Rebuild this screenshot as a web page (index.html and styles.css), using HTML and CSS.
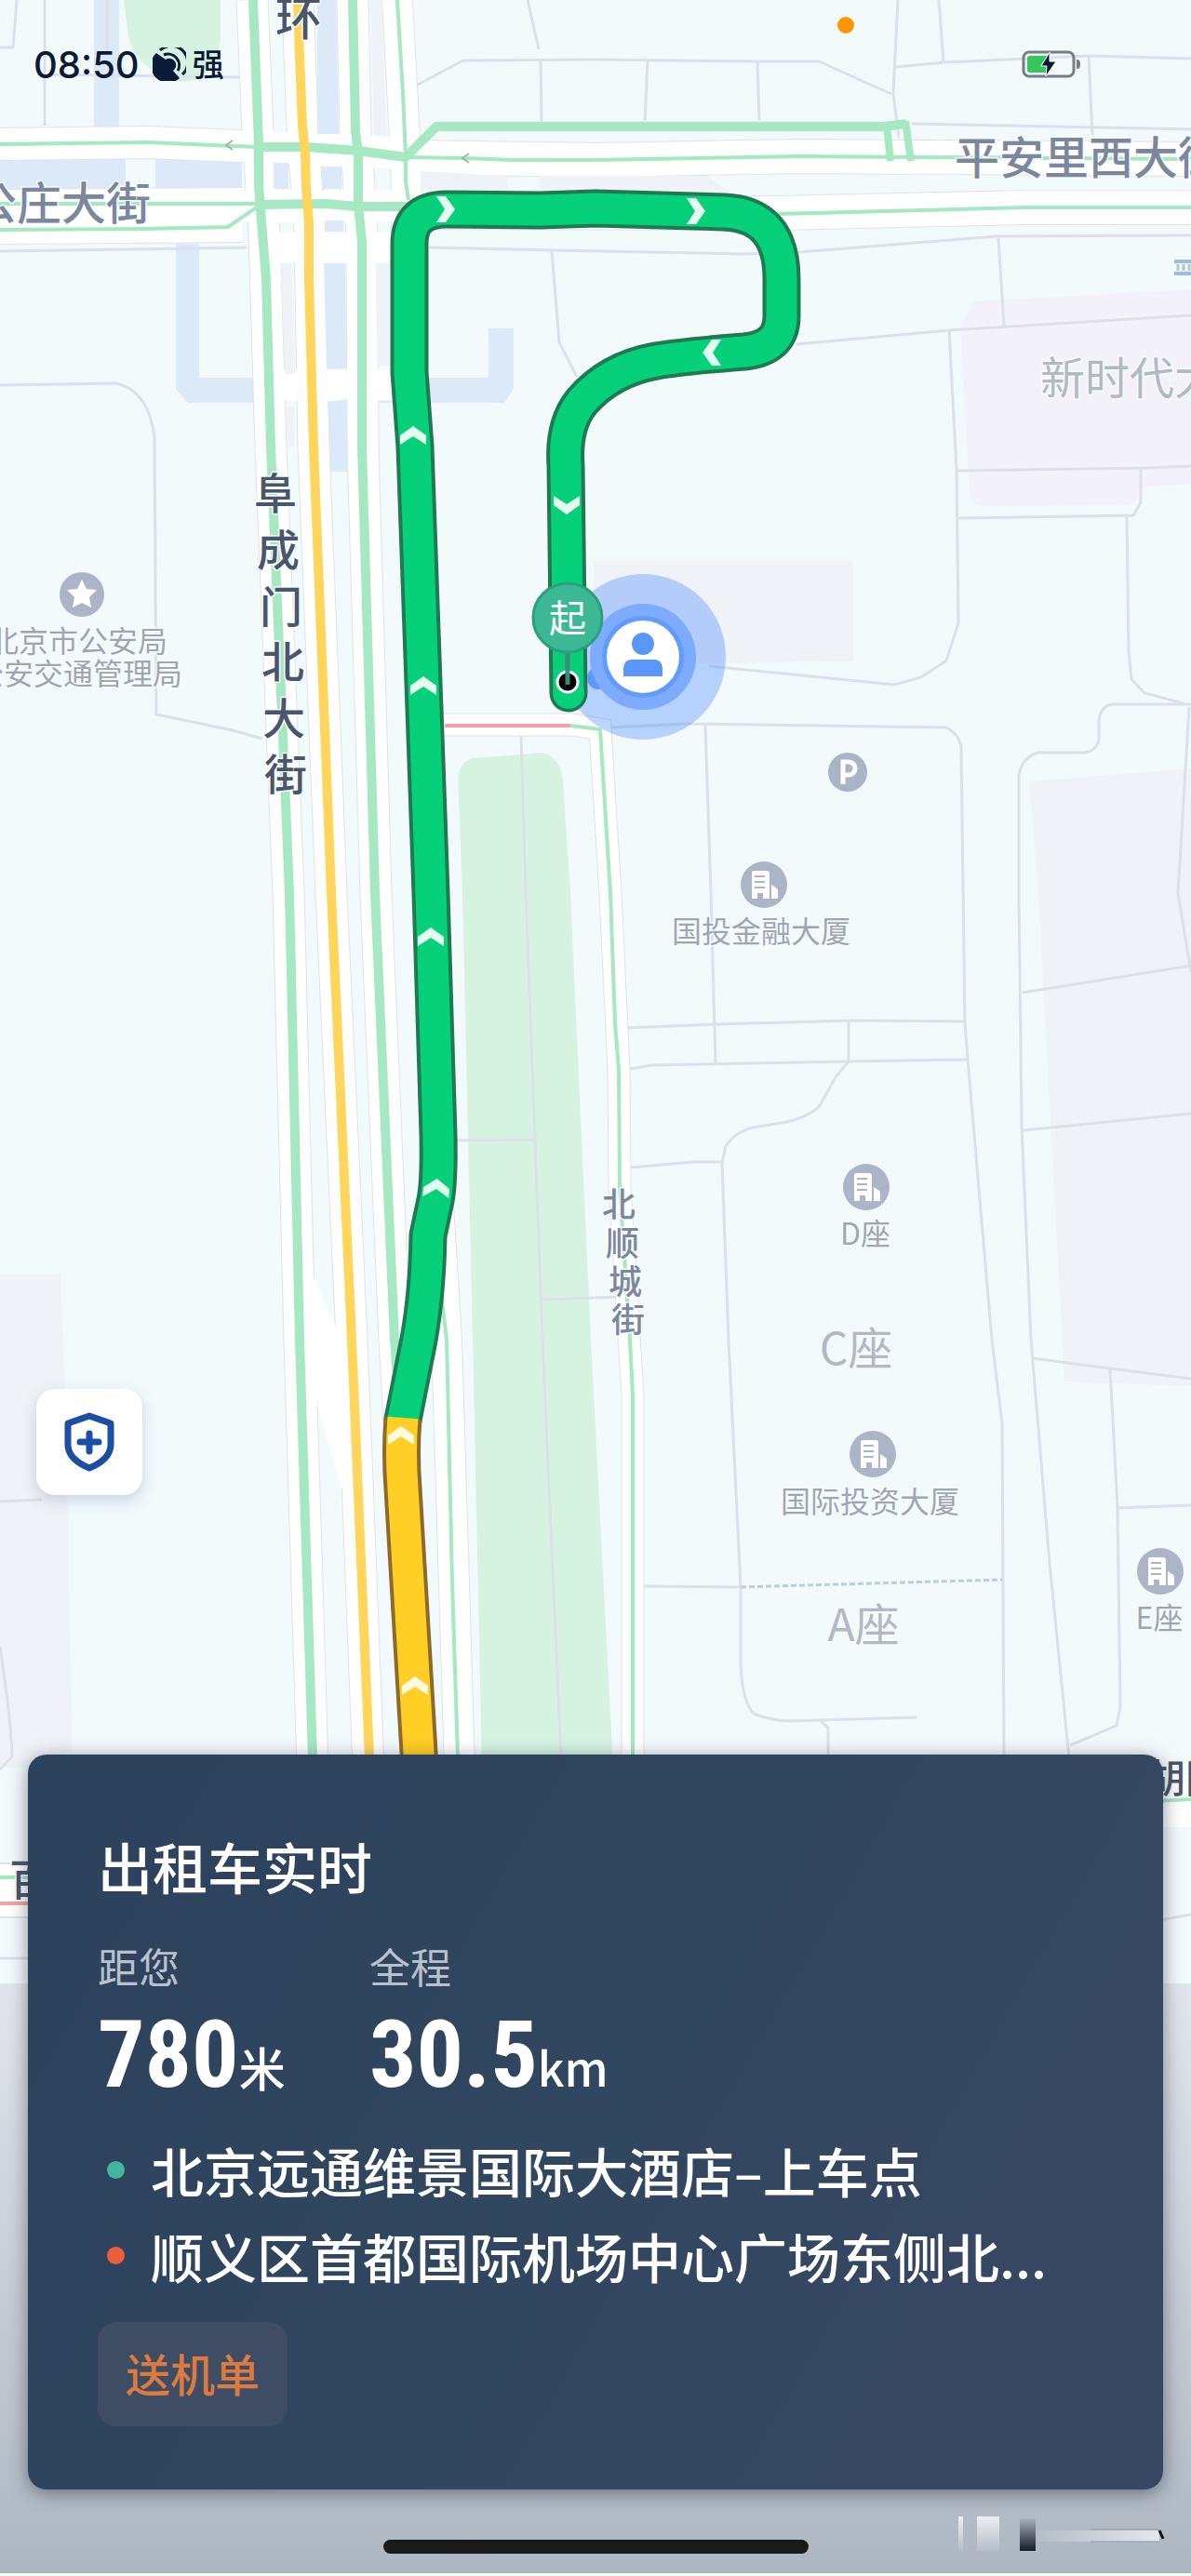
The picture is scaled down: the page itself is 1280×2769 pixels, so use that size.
FILE: index.html
```html
<!DOCTYPE html>
<html lang="zh-CN">
<head>
  <meta charset="UTF-8" />
  <meta name="viewport" content="width=device-width, initial-scale=1" />
  <title>出租车实时</title>
  <link rel="stylesheet" href="styles.css">
</head>
<body>
  <div class="screen">
    <svg class="map" viewBox="0 0 1280 2769" preserveAspectRatio="xMidYMin slice" role="img" aria-label="地图">
      <defs>
        <path id="chevron" d="M0 -10 L14 0 V10 L0 1 L-14 10 V0 Z" />
        <g id="building">
          <circle r="25" fill="#acb4c7" />
          <path d="M-13 15 V-13 Q-13 -15 -11 -15 H3 Q6 -15 6 -12 V15 H-1 V9 H-7 V15 Z" fill="#fff" />
          <path d="M8 15 V0 L14 4 Q15 5 15 7 V15 Z" fill="#fff" />
          <path d="M-10 -9 H1 M-10 -3 H1 M-10 3 H1" stroke="#acb4c7" stroke-width="2" />
        </g>
      </defs>

      <!-- Areas -->
      <g class="block">
        <path d="M638 603 H912 Q917 603 917 608 V710 L640 716 Z" />
        <path d="M1106 840 L1280 826 V1490 L1144 1485 L1116 960 Z" />
        <path d="M0 1370 H65 L70 1500 L78 1900 H0 Z" />
      </g>
      <path class="mall" d="M1046 324 L1280 311 V520 L1225 524 Q1224 543 1210 543 L1058 544 Q1043 543 1042 530 L1032 350 Z" />
      <g class="water">
        <path d="M101 0 H128 V136 H101 Z" />
        <path d="M0 170 H135 V203 H0 Z M167 170 L260 174 V203 H167 Z" />
        <path d="M189 262 H214 V406 H280 V433 H202 L189 418 Z" />
        <path d="M525 353 H552 V418 L542 433 H400 V406 H525 Z" />
      </g>
      <g class="park">
        <path d="M133 0 H237 V40 Q233 84 198 88 Q148 78 138 40 Z" />
        <path d="M492 835 Q494 820 507 815 L560 811 L582 809 Q602 812 605 840 L613 960 L635 1440 L659 1900 H518 L508 1440 L497 960 Z" />
      </g>

      <!-- Footpaths and plot lines -->
      <g class="path">
        <path d="M18 0 L14 51 H0 M48 0 V135 M48 80 L258 83 M115 0 V60" />
        <path d="M0 270 L265 266 M0 414 L125 412 Q160 420 166 470 L168 768 L250 785 L282 794" />
        <path d="M447 92 L498 65 L640 64 L815 66 L880 66 L958 101 M581 65 L582 131 M567 0 L579 53 M696 66 L693 130 M814 66 L816 130" />
        <path d="M965 0 L960 100 L966 148 M1009 0 L1014 67 M963 72 L1015 67 L1170 60 L1280 63 M1170 60 L1174 145 M980 133 L1280 139" />
        <path d="M461 266 L595 269 L800 273 L860 271 L1070 254 L1280 253 M593 270 L601 368 L620 405 M1073 256 L1079 350" />
        <path d="M856 370 L1020 355 L1280 339 M1020 355 L1028 505 L1030 670 L1017 710 L990 728 L961 736 L762 716" />
        <path d="M1029 506 L1230 503 L1280 501 M1226 505 V540 L1218 554 L1030 557 M1211 556 L1213 700 L1216 730 L1230 745 L1272 756" />
        <path d="M1280 757 H1195 Q1182 760 1181 775 V795 Q1178 808 1165 809 H1115 Q1097 815 1095 835 V960 L1098 1210 L1108 1440 L1128 1680 L1149 1890" />
        <path d="M1278 760 L1266 960 L1280 1045 M1099 1067 L1280 1038 M1100 1215 L1280 1197 M1110 1460 L1193 1471 L1280 1482" />
        <path d="M1193 1471 L1201 1620 L1204 1835 L1200 1855 L1150 1876 M1201 1621 L1280 1618" />
        <path d="M656 782 L740 778 L1017 782 Q1032 790 1033 805 L1037 1100 L1041 1150 L1066 1440 L1077 1530 L1079 1890" />
        <path d="M758 780 L764 960 L769 1143 M672 1105 L769 1101 L915 1097 L1037 1098 M677 1149 L700 1145 L912 1141 L1040 1139" />
        <path d="M912 1098 V1141 L898 1158 L880 1190 Q865 1203 840 1207 L815 1211 Q792 1214 780 1232 L776 1250 L783 1440 L796 1706 V1790 Q798 1830 810 1842 Q830 1850 850 1850 L985 1846" />
        <path d="M678 1255 L745 1249 H776 M692 1705 L796 1706 M882 1850 L890 1857 V1890" />
        <path d="M560 790 L565 960 L575 1225 L583 1440 L603 1890 M480 1226 L575 1225 M583 1397 L668 1394" />
        <path d="M0 1614 L45 1612 M0 1770 Q12 1850 13 1888 L0 1902 M0 2105 H40 M1240 2065 L1280 2058" />
      </g>
      <path class="crossing" d="M796 1706 L1077 1698" />

      <!-- Road casings, then road surfaces -->
      <g class="casing">
        <path d="M0 155 L160 153 L280 158" stroke-width="36" />
        <path d="M436 169 L640 172 L860 168 L1280 171" stroke-width="38" />
        <path d="M0 233 L260 231" stroke-width="60" />
        <path d="M430 228 L836 229 L1100 223 H1280" stroke-width="38" />
        <path d="M271 0 L277 140 L284 250 L291 480 L310 960 L322 1440 L336 1900" stroke-width="35" />
        <path d="M320 0 L325 140 L333 250 L337 480 L356 960 L378 1440 L396 1900" stroke-width="35" />
        <path d="M379 0 L382 140 L389 250 L390 480 L404 960 L424 1440 L433 1600" stroke-width="35" />
        <path d="M427 0 L436 168 L440 400" stroke-width="34" />
        <path d="M470 1280 L480 1440 L494 1900" stroke-width="34" />
        <path d="M470 779 H615 L645 784 L656 960 L665 1150 L666 1275 L680 1500 V1900" stroke-width="25" />
        <path d="M0 2032 H40" stroke-width="60" />
      </g>
      <g class="surface">
        <path d="M0 155 L160 153 L280 158 L440 165" stroke-width="34" />
        <path d="M436 169 L640 172 L860 168 L1280 171" stroke-width="36" />
        <path d="M0 233 L260 231" stroke-width="58" />
        <path d="M260 222 H440" stroke-width="34" />
        <path d="M430 228 L836 229 L1100 223 H1280" stroke-width="36" />
        <path d="M271 0 L277 140 L284 250 L291 480 L310 960 L322 1440 L336 1900" stroke-width="33" />
        <path d="M320 0 L325 140 L333 250 L337 480 L356 960 L378 1440 L396 1900" stroke-width="33" />
        <path d="M379 0 L382 140 L389 250 L390 480 L404 960 L424 1440 L433 1600" stroke-width="33" />
        <path d="M427 0 L436 168 L440 400" stroke-width="32" />
        <path d="M470 1280 L480 1440 L494 1900" stroke-width="32" />
        <path d="M470 779 H615 L645 784 L656 960 L665 1150 L666 1275 L680 1500 V1900" stroke-width="23" />
        <path d="M295 266 H425 M305 414 H425" stroke-width="33" />
        <path d="M330 1360 L366 1440 L368 1600 L342 1510 Z" stroke-width="2" fill="#fff" />
        <path d="M0 2032 H40 M1240 1936 H1280" stroke-width="56" />
      </g>
      <g class="block">
        <path d="M302 283 H313 L317 402 H306 Z M308 437 H316 V480 H309 Z M404 283 H420 V393 H405 Z M398 0 H410 L415 146 H402 Z" />
        <path d="M452 184 L546 189 V204 H452 Z M580 189 H760 L780 204 H580 Z" />
      </g>
      <g class="water">
        <path d="M341 0 H361 L364 144 H341 Z M346 179 H367 V203 H346 Z M294 175 H310 V203 H294 Z" />
        <path d="M350 237 H369 V249 H350 Z M348 283 H371 L372 396 L351 397 Z M352 432 L373 429 L374 507 H355 Z" />
      </g>

      <!-- Traffic -->
      <g class="traffic">
        <path d="M0 155 L160 153 L275 158 M436 169 L499 170 L550 172 L640 172 L860 168 L1280 171" stroke-width="4" />
        <path d="M0 219 H275 M0 247 L155 246 L245 244 L280 220" stroke-width="4" />
        <path d="M836 230 L1100 223 H1280" stroke-width="4" />
        <path d="M427 0 L433 100 L436 168 V195 L439 215" stroke-width="4" />
        <path d="M474 1390 L480 1440 L486 1700 L492 1890" stroke-width="4" />
        <path d="M613 780 L645 784 L656 960 L661 1100 L665 1150 L666 1275 L677 1440 L680 1500 V1890" stroke-width="4" />
        <path d="M0 2018 H40 M1240 1936 L1280 1934" stroke-width="4" />
        <path d="M272 0 L278 155 V200 L282 250 L286 300 L291 480 L311 960 L322 1440 L336 1890" stroke-width="10" />
        <path d="M379 0 L382 140 L385 165 V220 L389 260 L389 480 L403 960 L424 1440 L433 1560" stroke-width="10" />
        <path d="M275 158 L330 158 L385 162 L436 169 L469 136 H950 L974 133" stroke-width="10" />
        <path d="M275 220 L350 219 L385 222 H440" stroke-width="10" />
        <path d="M953 136 L957 173 M973 130 L979 173" stroke-width="8" />
      </g>
      <path class="traffic-slow" d="M320 0 L322 60 L325 135 L328 165 L329 200 L332 240 V300 L337 480 L356 960 L378 1440 L397 1890" />
      <path class="traffic-jam" d="M478 780 H613 M0 2046 H40" />
      <path class="arrow" d="M250 151 L243 156 L250 161 M504 165 L497 170 L504 175" />
      <path d="M1262 281 H1280 M1262 294 H1280" stroke="#9dbddd" stroke-width="4" />
      <path d="M1266 284 V291 M1272 284 V291 M1278 284 V291" stroke="#b9c3d3" stroke-width="3" />

      <!-- Street names -->
      <g class="street street-major">
        <text x="321" y="38" font-size="50">环</text>
        <text x="296" y="547" font-size="46">阜</text>
        <text x="299" y="608" font-size="46">成</text>
        <text x="302" y="669" font-size="46">门</text>
        <text x="304" y="728" font-size="46">北</text>
        <text x="305" y="789" font-size="46">大</text>
        <text x="307" y="849" font-size="46">街</text>
        <text x="1253" y="1927" font-size="42">胡</text>
        <text x="1295" y="1927" font-size="42">同</text>
        <text x="33" y="2037" font-size="46">百</text>
      </g>
      <g class="street">
        <text x="66" y="236" font-size="48">公庄大街</text>
        <text x="1170" y="187" font-size="48">平安里西大街</text>
        <text x="665" y="1308" font-size="36">北</text>
        <text x="669" y="1350" font-size="36">顺</text>
        <text x="672" y="1391" font-size="36">城</text>
        <text x="675" y="1432" font-size="36">街</text>
      </g>

      <!-- Places -->
      <g class="place">
        <text x="84" y="701">北京市公安局</text>
        <text x="84" y="736">公安交通管理局</text>
        <text x="818" y="1013">国投金融大厦</text>
        <text x="930" y="1338">D座</text>
        <text x="935" y="1626">国际投资大厦</text>
        <text x="1246" y="1751">E座</text>
      </g>
      <g class="place place-large">
        <text x="1238" y="424">新时代大厦</text>
        <text x="920" y="1467">C座</text>
        <text x="928" y="1764">A座</text>
      </g>
      <circle cx="88" cy="639" r="24" fill="#acb4c7" />
      <path d="M88 623 L93 633 L104 634 L96 642 L98 653 L88 648 L78 653 L80 642 L72 634 L83 633 Z" fill="#fff" />
      <circle cx="911" cy="830" r="21" fill="#a9b4c4" />
      <path d="M906 843 V819 H912 A7 7 0 0 1 912 833 H906" fill="none" stroke="#fff" stroke-width="5" />
      <use href="#building" x="821" y="951" />
      <use href="#building" x="931" y="1276" />
      <use href="#building" x="938" y="1563" />
      <use href="#building" x="1247" y="1689" />

      <!-- Own position, lower layer -->
      <circle cx="691" cy="706" r="89" fill="#5b93ff" opacity="0.4" />

      <!-- Route -->
      <g class="route">
        <path class="route-edge" stroke="#1f7a52" stroke-width="41" d="M611 745 L608 500 Q605 457 625 432 Q655 397 705 388 Q735 383 800 378 Q840 374 840 340 V300 Q840 230 778 228 L640 224 L580 226 L480 225 Q440 225 440 262 V400 L446 480 L463 960 L471 1220 Q472 1270 468 1290 L460 1328 Q459 1390 450 1440 L433 1526" />
        <path stroke="#07d07b" stroke-width="33" d="M611 745 L608 500 Q605 457 625 432 Q655 397 705 388 Q735 383 800 378 Q840 374 840 340 V300 Q840 230 778 228 L640 224 L580 226 L480 225 Q440 225 440 262 V400 L446 480 L463 960 L471 1220 Q472 1270 468 1290 L460 1328 Q459 1390 450 1440 L433 1526" />
        <circle class="route-end" cx="611" cy="745" r="17" />
        <path stroke="#8d6a2c" stroke-width="41" d="M433 1525 Q430 1560 433 1600 L451 1900" />
        <path stroke="#ffcf26" stroke-width="33" d="M433 1524 Q430 1560 433 1600 L451 1900" />
      </g>
      <g fill="#e4fbef">
        <use href="#chevron" transform="translate(479 225) rotate(90)" />
        <use href="#chevron" transform="translate(748 227) rotate(90)" />
        <use href="#chevron" transform="translate(765 379) rotate(-90)" />
        <use href="#chevron" transform="translate(609 543) rotate(180)" />
        <use href="#chevron" x="444" y="468" />
        <use href="#chevron" x="455" y="737" />
        <use href="#chevron" x="463" y="1007" />
        <use href="#chevron" transform="translate(469 1277) rotate(4)" />
      </g>
      <g fill="#fffbe0">
        <use href="#chevron" x="431" y="1543" />
        <use href="#chevron" x="446" y="1812" />
      </g>

      <!-- Own position -->
      <circle cx="643" cy="729" r="12" fill="#5e97fb" />
      <circle cx="691" cy="706" r="57" fill="#7dacff" />
      <circle cx="691" cy="706" r="44" fill="#639bfd" />
      <circle cx="691" cy="706" r="39" fill="#fff" />
      <circle cx="691" cy="692" r="12" fill="#5b97fb" />
      <path d="M670 727 V718 Q671 709 679 709 H703 Q711 709 712 718 V727 Z" fill="#5b97fb" />

      <!-- Start pin -->
      <circle cx="610" cy="733" r="11" fill="#000" stroke="#fff" stroke-width="3" />
      <path d="M610 700 V736" stroke="#3f8a76" stroke-width="5" />
      <circle cx="610" cy="664" r="37" fill="#3cb994" stroke="#2c9f7b" stroke-width="3" />
      <text class="pin-text" x="610" y="679">起</text>
    </svg>

    <header class="status-bar">
      <span class="status-time">08:50</span>
      <svg class="status-mute" viewBox="0 0 36 36" aria-hidden="true">
        <path d="M4 6 A18 18 0 0 0 29 33 L22 25 A7 7 0 0 0 14 13 Z" fill="#0b1b35" />
        <path d="M8 3 A17 17 0 0 1 32 29 M12 8 A12 12 0 0 1 27 25" fill="none" stroke="#0b1b35" stroke-width="3" />
      </svg>
      <span class="status-note">强</span>
      <span class="status-dot"></span>
      <svg class="status-battery" viewBox="0 0 64 32" aria-hidden="true">
        <rect x="2" y="3" width="54" height="26" rx="6" fill="none" stroke="#777d84" stroke-width="3" />
        <path d="M59 11 H60 Q63 11 63 16 Q63 21 60 21 H59 Z" fill="#777d84" />
        <path d="M9 7 H28 L20 18 H27 L26 25 H9 Q6 25 6 22 V10 Q6 7 9 7 Z" fill="#34c759" />
        <path d="M30 3 L21 18 H27 L26 29 L37 13 H30 Z" fill="#0b1b35" stroke="#fff" stroke-width="1" />
      </svg>
    </header>

    <main class="content">
      <button class="safety" type="button" aria-label="安全中心">
        <svg viewBox="0 0 56 64" aria-hidden="true">
          <path d="M28 4 L51 12 V36 Q50 51 28 60 Q6 51 5 36 V12 Z" />
          <path d="M28 23 V42 M18 32 H38" />
        </svg>
      </button>

      <section class="sheet">
        <div class="card">
          <h1 class="card-title">出租车实时</h1>
          <dl class="stats">
            <div class="stat">
              <dt>距您</dt>
              <dd><strong>780</strong>米</dd>
            </div>
            <div class="stat">
              <dt>全程</dt>
              <dd><strong>30.5</strong>km</dd>
            </div>
          </dl>
          <ul class="stops">
            <li class="stop stop-from">北京远通维景国际大酒店–上车点</li>
            <li class="stop stop-to">顺义区首都国际机场中心广场东侧北...</li>
          </ul>
          <span class="tag">送机单</span>
        </div>
        <div class="home-indicator"></div>
        <svg class="watermark" viewBox="0 0 230 44" aria-hidden="true">
          <defs>
            <linearGradient id="barDark" x2="0" y2="1">
              <stop offset="0" stop-color="#aab2bd" />
              <stop offset="1" stop-color="#141a26" />
            </linearGradient>
            <linearGradient id="barLight" x2="0" y2="1">
              <stop offset="0" stop-color="#edeff3" />
              <stop offset="1" stop-color="#b6bec8" />
            </linearGradient>
            <linearGradient id="streak" x2="1" y2="0">
              <stop offset="0" stop-color="#b4bcc6" />
              <stop offset="1" stop-color="#e4e7ec" />
            </linearGradient>
          </defs>
          <path d="M8 2 H13 V39 H8 Z M28 2 H52 V39 H28 Z" fill="url(#barLight)" />
          <path d="M74 4 H91 V39 H74 Z" fill="url(#barDark)" />
          <path d="M91 17 H224 V29 H91 Z" fill="url(#streak)" />
          <path d="M150 16 H224 M150 29 H224" stroke="#949ba5" />
          <path d="M224 17 L228 26" stroke="#10141c" stroke-width="3" />
        </svg>
      </section>
    </main>
  </div>
</body>
</html>
```
FILE: styles.css
```css
/* Base styles */
* {
  box-sizing: border-box;
}

body {
  margin: 0;
  font-family: "Noto Sans CJK SC", "Noto Sans", sans-serif;
  background-color: #f2fafc;
  color: white;
}

.screen {
  position: relative;
  display: flex;
  flex-direction: column;
  min-height: 100vh;
  overflow: hidden;
}

/* Map */
.map {
  position: absolute;
  inset: 0;
  width: 100%;
  height: 100%;
  background-color: #f2fafc;
}

.block { fill: #eff2f7; }
.mall { fill: #f3f2fb; }
.water { fill: #dbe9f8; }
.park { fill: #d6f3e2; }

.path {
  fill: none;
  stroke: #dde0e9;
  stroke-width: 3;
}

.crossing {
  stroke: #bccbdf;
  stroke-width: 3;
  stroke-dasharray: 6 3;
}

.casing {
  fill: none;
  stroke: #dfe2e6;
}

.surface {
  fill: none;
  stroke: white;
}

.traffic {
  fill: none;
  stroke: #a5e8c2;
  stroke-linejoin: round;
}

.traffic-slow {
  fill: none;
  stroke: #ffd55c;
  stroke-width: 10;
}

.traffic-jam {
  stroke: #f5a1a5;
  stroke-width: 4;
}

.arrow {
  fill: none;
  stroke: #a3b3ac;
  stroke-width: 2;
}

.route {
  fill: none;
  stroke-linejoin: round;
}

.route-edge {
  stroke-linecap: round;
}

.route-end {
  fill: #07d07b;
}

/* Map labels */
.street,
.place {
  text-anchor: middle;
  paint-order: stroke;
  stroke: #f8fcfd;
  stroke-width: 3px;
  stroke-linejoin: round;
}

.street {
  fill: #7c879d;
  font-weight: 500;
}

.street-major {
  fill: #4a566b;
}

.place {
  fill: #9ea6b4;
  font-size: 32px;
}

.place-large {
  fill: #b2b9c4;
  font-size: 48px;
}

.pin-text {
  fill: white;
  font-size: 40px;
  text-anchor: middle;
}

/* Status bar */
.status-bar {
  position: relative;
  display: flex;
  align-items: center;
  height: 138px;
  padding: 0 118px 0 36px;
  color: #0b1b35;
}

.status-time {
  font-family: Inter, sans-serif;
  font-size: 40px;
  font-weight: 500;
}

.status-mute {
  width: 36px;
  height: 36px;
  margin-left: 14px;
}

.status-note {
  margin-top: -4px;
  margin-left: 7px;
  font-size: 34px;
  font-weight: 500;
}

.status-battery {
  width: 64px;
  height: 32px;
  margin-left: auto;
}

.status-dot {
  position: absolute;
  top: 18px;
  left: calc(71% - 9px);
  width: 18px;
  height: 18px;
  border-radius: 50%;
  background-color: #ff9500;
}

/* Content over the map */
.content {
  position: relative;
  display: flex;
  flex: 1;
  flex-direction: column;
  justify-content: flex-end;
}

.safety {
  display: flex;
  align-items: center;
  justify-content: center;
  width: 114px;
  height: 114px;
  margin: 0 0 279px 39px;
  padding: 0;
  border: none;
  border-radius: 20px;
  background-color: white;
  box-shadow: 0 6px 16px rgba(60, 80, 120, 0.22);
  cursor: pointer;
}

.safety svg {
  width: 56px;
  height: 64px;
  fill: none;
  stroke: #1c4fa3;
  stroke-width: 7;
  stroke-linejoin: round;
  stroke-linecap: round;
}

/* Bottom sheet */
.sheet {
  position: relative;
  padding: 0 30px 24px;
}

.sheet::before {
  content: "";
  position: absolute;
  top: 246px;
  right: 0;
  bottom: 3px;
  left: 0;
  background: linear-gradient(#e2e6ec, #b4bcc7 88%, #acb6c1);
}

.card {
  position: relative;
  padding: 74px 75px 68px;
  border-radius: 20px;
  background: linear-gradient(120deg, #2c425d, #31475f 50%, #374761 80%);
  box-shadow: 0 4px 20px rgba(30, 35, 50, 0.5);
}

.card-title {
  margin: 0;
  font-size: 59px;
  font-weight: 500;
  line-height: 92px;
}

.stats {
  display: flex;
  margin: 31px 0 0;
}

.stat {
  min-width: 292px;
}

.stat dt {
  font-size: 44px;
  line-height: 60px;
  color: #b9c1cc;
}

.stat dd {
  height: 143px;
  margin: 0;
  font-size: 50px;
  font-weight: 500;
  line-height: 132px;
  white-space: nowrap;
}

.stat strong {
  font-family: "Liberation Sans Narrow", "Roboto Condensed", Roboto, sans-serif;
  font-size: 100px;
  font-weight: 700;
}

.stops {
  margin: 0;
  padding: 0;
  list-style: none;
}

.stop {
  display: flex;
  align-items: center;
  gap: 28px;
  padding-left: 10px;
  font-size: 57px;
  font-weight: 500;
  line-height: 92px;
  white-space: nowrap;
}

.stop::before {
  content: "";
  width: 19px;
  height: 19px;
  border-radius: 50%;
}

.stop-from::before {
  background-color: #43b59d;
}

.stop-to::before {
  background-color: #ec5d3a;
}

.tag {
  display: inline-block;
  margin-top: 26px;
  padding: 0 30px 4px;
  border-radius: 20px;
  background-color: #3e4d64;
  font-size: 48px;
  font-weight: 500;
  line-height: 108px;
  color: #db7b40;
  vertical-align: top;
}

.home-indicator {
  position: relative;
  width: 457px;
  height: 15px;
  margin: 54px auto 0;
  border-radius: 8px;
  background-color: #1a1a1a;
}

.watermark {
  position: absolute;
  right: 28px;
  bottom: 22px;
  width: 230px;
  height: 44px;
}
```
